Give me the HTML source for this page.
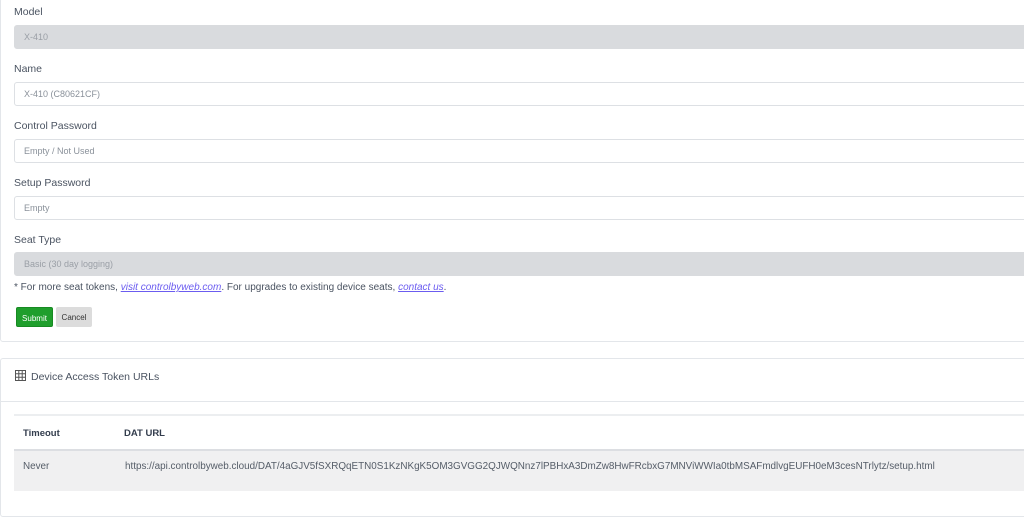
<!DOCTYPE html>
<html><head><meta charset="utf-8"><style>
*{box-sizing:border-box;margin:0;padding:0}
body{width:1024px;height:517px;overflow:hidden;background:#fff;font-family:"Liberation Sans",sans-serif;color:#4a5361;position:relative}
.card1{position:absolute;left:0;top:-2px;width:1030px;height:344px;border:1px solid #e3e6ea;border-radius:3px}
.card2{position:absolute;left:0;top:358px;width:1030px;height:159px;border:1px solid #e3e6ea;border-radius:3px}
.lbl{position:absolute;left:14px;font-size:10.5px;color:#4a5361}
.inp{position:absolute;left:14px;width:1015px;height:24px;border:1px solid #dde0e4;border-radius:3px;font-size:9px;color:#8a919a;padding:6px 0 0 9px;background:#fff}
.dis{background:#d9dbde;border-color:#d9dbde;color:#9a9fa6}
a{color:#6b5cf0;font-style:italic;text-decoration:underline}
.btn{position:absolute;top:307px;height:20px;font-size:8px;border-radius:2px;padding-top:6px;text-align:center}
</style></head><body>
<div class="card1"></div>
<div class="lbl" style="top:6px">Model</div>
<div class="inp dis" style="top:25px">X-410</div>
<div class="lbl" style="top:63px">Name</div>
<div class="inp" style="top:82px">X-410 (C80621CF)</div>
<div class="lbl" style="top:120px">Control Password</div>
<div class="inp" style="top:139px">Empty / Not Used</div>
<div class="lbl" style="top:177px">Setup Password</div>
<div class="inp" style="top:196px">Empty</div>
<div class="lbl" style="top:234px">Seat Type</div>
<div class="inp dis" style="top:252px">Basic (30 day logging)</div>
<div class="lbl" style="top:282px;font-size:10px">* For more seat tokens, <a>visit controlbyweb.com</a>. For upgrades to existing device seats, <a>contact us</a>.</div>
<div class="btn" style="left:16px;width:37px;background:#1f9e2c;color:#fff;border:1px solid #178a22">Submit</div>
<div class="btn" style="left:56px;width:36px;background:#dcdcdc;color:#333">Cancel</div>
<div class="card2"></div>
<svg style="position:absolute;left:15px;top:370px" width="11" height="11" viewBox="0 0 11 11" fill="none" stroke="#555" stroke-width="1"><rect x="0.5" y="0.5" width="10" height="10"/><path d="M0.5 3.8H10.5M0.5 7.2H10.5M3.8 0.5V10.5M7.2 0.5V10.5"/></svg>
<div style="position:absolute;left:31px;top:371px;font-size:10.5px;color:#4a5361">Device Access Token URLs</div>
<div style="position:absolute;left:0;top:401px;width:1024px;height:1px;background:#e3e6ea"></div>
<div style="position:absolute;left:14px;top:414px;width:1010px;height:2px;background:#eceef0"></div>
<div style="position:absolute;left:23px;top:428px;font-size:9.5px;font-weight:bold;color:#333d4d">Timeout</div>
<div style="position:absolute;left:124px;top:428px;font-size:9.5px;font-weight:bold;color:#333d4d">DAT URL</div>
<div style="position:absolute;left:14px;top:449px;width:1010px;height:42px;background:#f0f0f1;border-top:2px solid #dcdee2"></div>
<div style="position:absolute;left:23px;top:461px;font-size:9.9px;color:#555d68">Never</div>
<div style="position:absolute;left:125px;top:461px;font-size:9.9px;color:#555d68;white-space:nowrap">https://api.controlbyweb.cloud/DAT/4aGJV5fSXRQqETN0S1KzNKgK5OM3GVGG2QJWQNnz7lPBHxA3DmZw8HwFRcbxG7MNViWWIa0tbMSAFmdlvgEUFH0eM3cesNTrlytz/setup.html</div>
</body></html>
